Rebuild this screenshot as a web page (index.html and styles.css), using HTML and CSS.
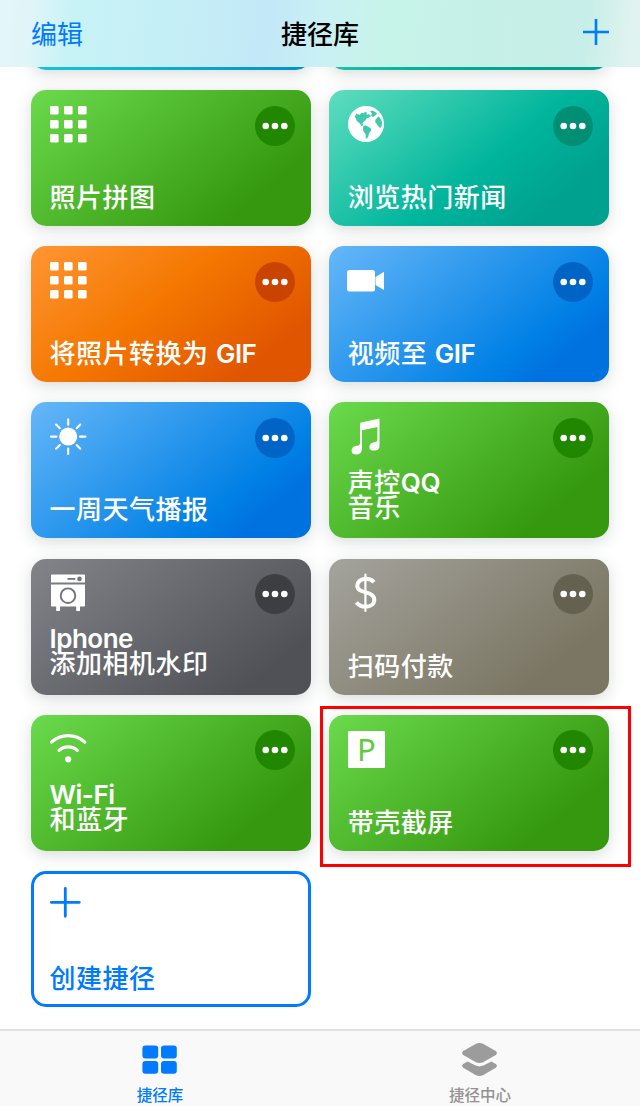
FILE: index.html
```html
<!DOCTYPE html>
<html lang="zh-CN">
<head>
    <meta charset="UTF-8">
    <meta name="viewport" content="width=device-width, initial-scale=1.0">
    <title>捷径库</title>
    <link rel="stylesheet" href="styles.css">
</head>
<body>
    <div class="app">
        <header class="navbar">
            <span class="nav-edit">编辑</span>
            <h1>捷径库</h1>
            <svg class="nav-add" viewBox="0 0 26 26"><path d="M13 0V26M0 13H26"/></svg>
        </header>

        <main class="library">
            <div class="grid">
                <!-- Row scrolled under the nav bar -->
                <div class="card cyan"></div>
                <div class="card teal"></div>

                <div class="card green">
                    <svg class="icon" viewBox="0 0 37 37"><use href="#dots-grid"/></svg>
                    <svg class="more" viewBox="0 0 40 40"><use href="#more"/></svg>
                    <p class="title">照片拼图</p>
                </div>
                <div class="card teal">
                    <svg class="icon" viewBox="0 0 111 111">
                        <circle cx="54" cy="54" r="54" fill="#fff"/>
                        <g class="land">
                            <path d="M20 33L25 23L34 26L40 21L48 22L51 17L57 20L55 26L63 25L69 30L62 35L56 37L53 43L47 47L43 52L46 58L41 60L37 54L31 49L25 43L24 37Z"/>
                            <path d="M46 61L52 58L61 62L69 68L69 74L64 80L61 91L57 98L53 96L53 85L46 76L45 67Z"/>
                            <path d="M66 15L75 14L87 21L84 27L78 31L74 34L69 28L72 23Z"/>
                            <path d="M82 41L87 37L91 31L97 37L102 49L101 61L97 66L91 61L86 54L82 49Z"/>
                        </g>
                    </svg>
                    <svg class="more" viewBox="0 0 40 40"><use href="#more"/></svg>
                    <p class="title">浏览热门新闻</p>
                </div>

                <div class="card orange">
                    <svg class="icon" viewBox="0 0 37 37"><use href="#dots-grid"/></svg>
                    <svg class="more" viewBox="0 0 40 40"><use href="#more"/></svg>
                    <p class="title">将照片转换为 <span class="latin">GIF</span></p>
                </div>
                <div class="card blue">
                    <svg class="icon" viewBox="0 0 37 37">
                        <rect x="-1" y="8" width="28" height="21.5" rx="2.5"/>
                        <path d="M27.5 15L36 9.8V28L27.5 23Z"/>
                    </svg>
                    <svg class="more" viewBox="0 0 40 40"><use href="#more"/></svg>
                    <p class="title">视频至 <span class="latin">GIF</span></p>
                </div>

                <div class="card blue">
                    <svg class="icon" viewBox="0 0 37 37">
                        <circle cx="18.2" cy="18.6" r="9"/>
                        <path class="line" stroke-width="2.1" d="M18.2 1.3V6.7M18.2 30.5V36M1 18.6H6.5M30 18.6H35.5M6.1 6.5L9.8 10.2M26.6 27L30.3 30.7M30.3 6.5L26.6 10.2M9.8 27L6.1 30.7"/>
                    </svg>
                    <svg class="more" viewBox="0 0 40 40"><use href="#more"/></svg>
                    <p class="title">一周天气播报</p>
                </div>
                <div class="card green">
                    <svg class="icon" viewBox="0 0 37 37">
                        <path d="M12 6Q12 4.7 13.3 4.4L31.5.4V28Q31.5 32.6 26 32.6Q21.3 32.4 21.3 28.9Q21.3 25 27 24Q29.4 23.6 29.4 21.5V9L14 12.3V31Q13.7 36.5 8 36.5Q3.6 36.3 3.6 32.5Q3.6 28.4 9 27.8Q12 27.4 12 25Z"/>
                    </svg>
                    <svg class="more" viewBox="0 0 40 40"><use href="#more"/></svg>
                    <p class="title two-line">声控<span class="latin">QQ</span><br>音乐</p>
                </div>

                <div class="card graphite">
                    <svg class="icon" viewBox="0 0 37 37">
                        <path d="M1 1.4Q1 .4 2 .4H34Q35 .4 35 1.4V8.6H1ZM1 10.6H35V31.4Q35 32.4 34 32.4H30V37H26.2V32.4H10V37H6.2V32.4H2Q1 32.4 1 31.4Z"/>
                        <g class="detail">
                            <path d="M17.5 4.9H25.3" stroke-width="1.8"/>
                            <circle class="knob" cx="29.5" cy="4.9" r="2.3"/>
                            <circle cx="18" cy="21.7" r="7.3" stroke-width="1.9"/>
                        </g>
                    </svg>
                    <svg class="more" viewBox="0 0 40 40"><use href="#more"/></svg>
                    <p class="title two-line"><span class="latin">Iphone</span><br>添加相机水印</p>
                </div>
                <div class="card taupe">
                    <svg class="icon" viewBox="0 0 37 37">
                        <path class="line dollar" d="M26 8.2Q23 4.8 18 4.8C12.5 4.8 9.3 8 9.3 11.5C9.3 16 13 17.2 18 18.4C23 19.6 26.3 21.3 26.3 25.8C26.3 29.8 22.8 32.8 17.6 32.8Q11.8 32.8 8.4 28.6"/>
                        <path class="line" stroke-width="2.2" stroke-linecap="butt" d="M17.4.6V37"/>
                    </svg>
                    <svg class="more" viewBox="0 0 40 40"><use href="#more"/></svg>
                    <p class="title">扫码付款</p>
                </div>

                <div class="card green">
                    <svg class="icon" viewBox="0 0 37 37">
                        <path class="line" stroke-width="3.2" d="M1.5 12.2Q8.5 5.6 18.2 5.6T34.8 12.2M9 20.4Q12.8 16.8 18.2 16.8T27.4 20.4"/>
                        <circle cx="18.2" cy="29.3" r="3.1"/>
                    </svg>
                    <svg class="more" viewBox="0 0 40 40"><use href="#more"/></svg>
                    <p class="title two-line"><span class="latin">Wi-Fi</span><br>和蓝牙</p>
                </div>
                <div class="card green selected">
                    <span class="letter-icon">P</span>
                    <svg class="more" viewBox="0 0 40 40"><use href="#more"/></svg>
                    <p class="title">带壳截屏</p>
                </div>

                <div class="card create">
                    <svg class="icon" viewBox="0 0 37 37"><path class="line" stroke-width="2.8" d="M15.3 1.3V29.3M1.3 15.3H29.3"/></svg>
                    <p class="title">创建捷径</p>
                </div>
            </div>
        </main>

        <nav class="tabbar">
            <div class="tab active">
                <svg viewBox="0 0 36 34">
                    <rect x=".4" y="2.6" width="15.8" height="12.8" rx="3"/>
                    <rect x="19" y="2.6" width="15.8" height="12.8" rx="3"/>
                    <rect x=".4" y="18" width="15.8" height="12.8" rx="3"/>
                    <rect x="19" y="18" width="15.8" height="12.8" rx="3"/>
                </svg>
                <span>捷径库</span>
            </div>
            <div class="tab">
                <svg viewBox="0 0 36 34">
                    <path d="M14 .8Q17.5-.8 21 .8L33.8 7.9Q36 10 33.8 12.1L21 19.2Q17.5 20.8 14 19.2L1.2 12.1Q-1 10 1.2 7.9Z"/>
                    <path d="M5.6 18.6L13.6 22.6Q17.5 24.2 21.4 22.6L29.4 18.6L33.8 20.9Q36 22.6 33.8 24.7L21 32.3Q17.5 33.9 14 32.3L1.2 24.7Q-1 22.6 1.2 20.9Z"/>
                </svg>
                <span>捷径中心</span>
            </div>
        </nav>
    </div>

    <!-- Shared symbols -->
    <svg class="symbols">
        <symbol id="dots-grid" viewBox="0 0 37 37">
            <rect x="0" y="0" width="8.6" height="8.6" rx="1.4"/>
            <rect x="14" y="0" width="8.6" height="8.6" rx="1.4"/>
            <rect x="28" y="0" width="8.6" height="8.6" rx="1.4"/>
            <rect x="0" y="14" width="8.6" height="8.6" rx="1.4"/>
            <rect x="14" y="14" width="8.6" height="8.6" rx="1.4"/>
            <rect x="28" y="14" width="8.6" height="8.6" rx="1.4"/>
            <rect x="0" y="28" width="8.6" height="8.6" rx="1.4"/>
            <rect x="14" y="28" width="8.6" height="8.6" rx="1.4"/>
            <rect x="28" y="28" width="8.6" height="8.6" rx="1.4"/>
        </symbol>
        <symbol id="more" viewBox="0 0 40 40">
            <circle cx="10.7" cy="20" r="3.3"/>
            <circle cx="20" cy="20" r="3.3"/>
            <circle cx="29.3" cy="20" r="3.3"/>
        </symbol>
    </svg>
</body>
</html>
```
FILE: styles.css
```css
*,
*::after {
    box-sizing: border-box;
}

body {
    margin: 0;
    font-family: 'Inter', 'Noto Sans CJK SC', sans-serif;
    background: #fff;
}

.app {
    display: flex;
    flex-direction: column;
    width: 640px;
    height: 1106px;
    overflow: hidden;
}

/* Nav bar */
.navbar {
    display: grid;
    grid-template-columns: 1fr auto 1fr;
    align-items: center;
    flex: none;
    height: 67px;
    padding: 0 31px 3px;
    background: linear-gradient(97deg, #e4f6fa 0%, #e0f5f9 5%, #c8f3f6 11%, #c5eff6 26%, #c3e8f8 42%, #c9f0f4 50%, #c7f4e9 60%, #c5f0e8 75%, #c7eee8 91%, #e0f3f0 98%);
}

.nav-edit {
    color: #007aff;
    font-size: 26px;
}

h1 {
    margin: 0;
    font-size: 26px;
    font-weight: 500;
    color: #000;
}

.nav-add {
    justify-self: end;
    width: 26px;
    height: 26px;
    fill: none;
    stroke: #007aff;
    stroke-width: 2.6;
}

/* Shortcut cards */
.library {
    flex: 1;
    min-height: 0;
    overflow: hidden;
}

.grid {
    display: grid;
    grid-template-columns: 280px 280px;
    grid-auto-rows: 136px;
    gap: 20.2px 18.3px;
    margin: -133.2px 0 0 30.9px;
}

.card {
    position: relative;
    display: grid;
    grid-template-columns: 1fr auto;
    grid-template-rows: auto 1fr;
    padding: 15px 15.8px 16px 18.6px;
    border-radius: 15px;
    color: #fff;
    box-shadow: 0 4px 16px rgba(30, 50, 50, 0.17);
}

.cyan {
    background: linear-gradient(141deg, #35d4e0, #12bcd4 50%, #008fc8);
}

.green {
    --tint: #5fcb40;
    --more: #218600;
    background: linear-gradient(141deg, #6bda4d 0%, #35980f 80%);
}

.teal {
    --tint: #3fcbab;
    --more: #008e75;
    background: linear-gradient(141deg, #60ddbe 0%, #00b59c 55%, #00a18f 82%);
}

.orange {
    --more: #ca4400;
    background: linear-gradient(141deg, #ff9633 0%, #f47700 44%, #e05500 83%);
}

.blue {
    --more: #0064c6;
    background: linear-gradient(141deg, #66b7f8 0%, #0080e5 71%, #0072e0 83%);
}

.graphite {
    --tint: #73757a;
    --more: #3d3e42;
    background: linear-gradient(141deg, #828489 0%, #505156 84%);
}

.taupe {
    --more: #656151;
    background: linear-gradient(141deg, #a4a39d 0%, #7b7663 80%);
}

.icon {
    width: 37px;
    height: 37px;
    margin: 0.6px 0 0 0.5px;
    fill: #fff;
    overflow: visible;
}

.line {
    fill: none;
    stroke: #fff;
    stroke-linecap: round;
}

.dollar {
    stroke-width: 4;
    stroke-linecap: butt;
}

.land {
    fill: var(--tint);
}

.detail {
    fill: none;
    stroke: var(--tint);
}

.knob {
    fill: var(--tint);
    stroke: none;
}

.letter-icon {
    width: 37px;
    height: 37px;
    margin-top: 1px;
    border-radius: 1px;
    background: #fff;
    color: var(--tint);
    font: 31px/36px 'Noto Sans', sans-serif;
    text-align: center;
}

.more {
    width: 40px;
    height: 40px;
    margin-top: 0.6px;
    border-radius: 50%;
    background: var(--more);
    fill: #fff;
}

.title {
    grid-column: 1 / -1;
    align-self: end;
    margin: 0;
    font-size: 26px;
    font-weight: 500;
    line-height: 25px;
    letter-spacing: 0.5px;
    white-space: nowrap;
}

.latin {
    font-weight: 600;
    letter-spacing: -0.5px;
}

.two-line {
    margin-bottom: 2.8px;
}

/* Frame around the chosen shortcut */
.selected::after {
    content: '';
    position: absolute;
    top: -8.8px;
    left: -9.2px;
    width: 311px;
    height: 161px;
    border: 3px solid #f00;
}

.create {
    padding: 12px 12.6px 13px 15.6px;
    border: 3px solid #007aff;
    color: #007aff;
    box-shadow: none;
}

.create .line {
    stroke: #007aff;
}

/* Tab bar */
.tabbar {
    display: flex;
    flex: none;
    height: 77px;
    border-top: 2px solid #e0e0e0;
    background: #f9f9f9;
}

.tab {
    display: flex;
    flex: 1;
    flex-direction: column;
    align-items: center;
    padding-top: 12px;
    color: #929292;
    fill: #9c9c9c;
    font-size: 15.5px;
    font-weight: 500;
    line-height: 20px;
}

.tab svg {
    width: 36px;
    height: 34px;
    margin-bottom: 9px;
}

.active {
    color: #007aff;
    fill: #007aff;
}

.symbols {
    display: none;
}
```
